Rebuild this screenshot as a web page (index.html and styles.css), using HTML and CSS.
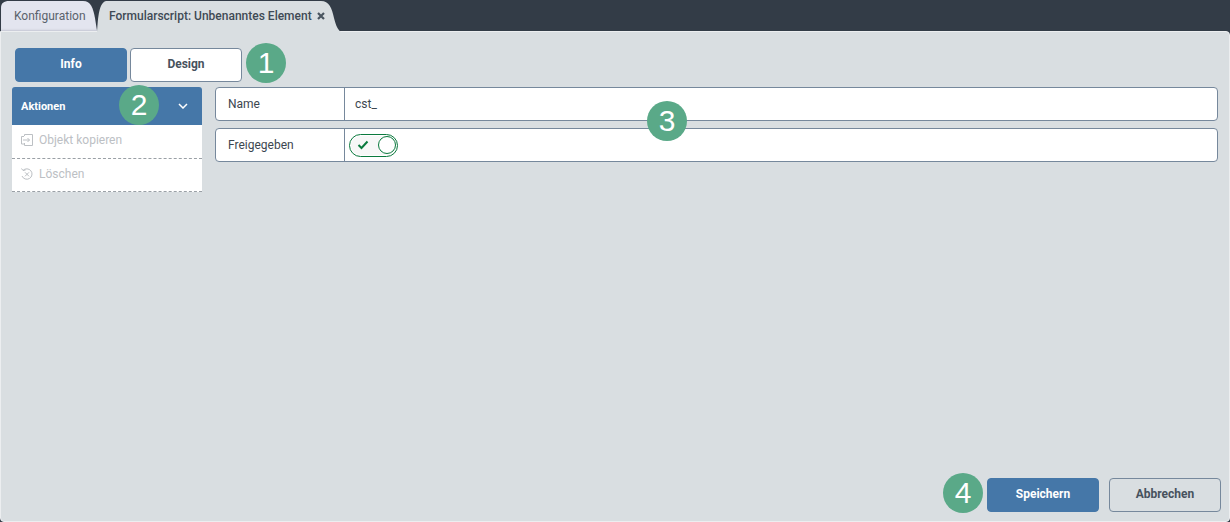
FILE: index.html
```html
<!DOCTYPE html>
<html lang="de">
<head>
<meta charset="utf-8">
<title>Formularscript</title>
<link rel="stylesheet" href="styles.css">
</head>
<body>
<div class="tabbar">
  <div class="tab tab-inactive">Konfiguration</div>
  <div class="tab tab-active">
    <span>Formularscript: Unbenanntes Element</span>
    <svg class="tab-close" viewBox="0 0 8 8" width="8" height="8"><path d="M1 1L7 7M7 1L1 7" stroke="#4a5560" stroke-width="2.2" fill="none"/></svg>
  </div>
</div>
<main class="panel">
  <div class="modes">
    <button class="btn btn-primary">Info</button>
    <button class="btn btn-outline btn-white">Design</button>
    <span class="marker marker-1">1</span>
  </div>
  <div class="columns">
    <aside class="side">
      <div class="side-head">
        <span>Aktionen</span>
        <svg viewBox="0 0 10 6" width="10" height="6"><path d="M1 1L5 5L9 1" stroke="#fff" stroke-width="1.5" fill="none"/></svg>
        <span class="marker marker-2">2</span>
      </div>
      <div class="side-item">
        <svg viewBox="0 0 14 14" width="14" height="14" fill="none" stroke="#bcc0c4" stroke-width="1"><path d="M1.500 11V3.500H4M1.500 11H4.500M4.500 3V1.500H12.500V12.500H4.500V10M3 7H9.500M7.500 5L9.500 7L7.500 9"/></svg>
        <span>Objekt kopieren</span>
      </div>
      <div class="side-item">
        <svg viewBox="0 0 14 14" width="14" height="14" fill="none" stroke="#bcc0c4" stroke-width="1"><path d="M3 3.500A5.200 5.200 0 1 1 2 9M1.500 1.500L3 3.500L5.500 3M5 5.300L9 9.300M9 5.300L5 9.300"/></svg>
        <span>Löschen</span>
      </div>
    </aside>
    <section class="form">
      <div class="row">
        <div class="row-label">Name</div>
        <div class="row-value">cst_</div>
      </div>
      <div class="row">
        <div class="row-label">Freigegeben</div>
        <div class="row-value">
          <div class="toggle">
            <svg viewBox="0 0 12 10" width="12" height="10"><path d="M1.500 5L4.500 8L10.500 1.500" stroke="#0b7a3e" stroke-width="2" fill="none"/></svg>
            <span class="knob"></span>
          </div>
        </div>
      </div>
      <span class="marker marker-3">3</span>
    </section>
  </div>
  <div class="actions">
    <span class="marker marker-4">4</span>
    <button class="btn btn-primary">Speichern</button>
    <button class="btn btn-outline">Abbrechen</button>
  </div>
</main>
</body>
</html>
```
FILE: styles.css
```css
* { box-sizing: border-box; }
html, body { margin: 0; padding: 0; }
body {
  width: 1230px;
  height: 522px;
  background: #333c47;
  font-family: Roboto, "Liberation Sans", sans-serif;
  color: #3c4650;
  overflow: hidden;
  display: flex;
  flex-direction: column;
}
.tabbar {
  height: 31px;
  display: flex;
  align-items: flex-start;
  padding-left: 1px;
  flex: none;
  position: relative;
  z-index: 1;
}
.tab {
  height: 32px;
  display: flex;
  align-items: center;
  font-size: 12px;
  flex: none;
}
.tab-inactive {
  width: 96px;
  padding: 0 0 1px 13px;
  background: #e3e5ef;
  color: #5a626c;
  clip-path: path("M0 31 L0 8 C0 3 3 1 8 1 L82 1 C90 1 92 8 94 18 L96 31 Z");
  box-shadow: inset 0 -3px 2px -1px #c4c7d2;
}
.tab-active {
  width: 244px;
  padding: 0 0 0 12px;
  gap: 5px;
  background: #d9dee1;
  color: #3f4a55;
  font-weight: 500;
  clip-path: path("M0 32 C1 22 1 3 9 1 L224 1 C232 1 235 8 237 18 C239 26 241 30 244 32 Z");
}
.panel {
  flex: 1;
  background: #d9dee1;
  border: 1px solid #eceef0;
  border-radius: 0 4px 4px 4px;
  display: flex;
  flex-direction: column;
  position: relative;
}
.modes {
  display: flex;
  gap: 3px;
  padding: 16px 0 0 14px;
  height: 55px;
  flex: none;
  position: relative;
}
.btn {
  width: 112px;
  height: 34px;
  border-radius: 4px;
  font-family: inherit;
  font-size: 12px;
  font-weight: 700;
  padding: 0 0 2px;
  cursor: pointer;
}
.btn-primary {
  background: #4577a8;
  color: #fff;
  border: 1px solid #4577a8;
}
.btn-outline {
  background: transparent;
  color: #47525d;
  border: 1px solid #76889c;
}
.btn-white { background: #fff; }
.marker {
  position: absolute;
  width: 40px;
  height: 40px;
  border-radius: 50%;
  background: #5aa988;
  color: #fff;
  font-family: "Liberation Sans", sans-serif;
  font-size: 30px;
  font-weight: 400;
  line-height: 40px;
  text-align: center;
}
.marker-1 { left: 245px; top: 11px; }
.marker-2 { left: 107px; top: -2px; }
.marker-3 { left: 432px; top: 14px; }
.marker-4 { position: static; margin: 0 -6px -1px 0; }
.columns {
  display: flex;
  gap: 13px;
  padding-left: 11px;
  padding-right: 11px;
  flex: 1;
}
.side {
  width: 190px;
  flex: none;
}
.side-head {
  height: 38px;
  background: #4577a8;
  color: #fff;
  font-size: 11px;
  font-weight: 700;
  border-radius: 3px 3px 0 0;
  padding: 0 14px 0 9px;
  display: flex;
  align-items: center;
  justify-content: space-between;
  position: relative;
}
.side-item {
  height: 34px;
  background: #fff;
  border-bottom: 1px dashed #9aa0a6;
  color: #bcc0c4;
  font-size: 12px;
  display: flex;
  align-items: center;
  gap: 5px;
  padding: 0 0 3px 8px;
}
.side-item:last-child { height: 33px; }
.form {
  flex: 1;
  display: flex;
  flex-direction: column;
  gap: 7px;
  position: relative;
}
.row {
  height: 34px;
  display: flex;
  background: #fff;
  border: 1px solid #76889c;
  border-radius: 4px;
  font-size: 12px;
}
.row-label {
  width: 129px;
  padding-left: 12px;
  border-right: 1px solid #76889c;
  display: flex;
  align-items: center;
}
.row-value {
  flex: 1;
  padding-left: 4px;
  display: flex;
  align-items: center;
}
.row:first-child .row-value { padding-left: 10px; }
.toggle {
  width: 49px;
  height: 23px;
  border: 1px solid #0b7a3e;
  border-radius: 12px;
  background: #f7f7f7;
  box-shadow: inset 0 0 0 1px #fff;
  display: flex;
  align-items: center;
  justify-content: space-between;
  padding: 0 0 0 7px;
}
.knob {
  width: 18px;
  height: 18px;
  margin-right: 1px;
  border-radius: 50%;
  background: #fff;
  border: 1px solid #0b7a3e;
}
.actions {
  display: flex;
  justify-content: flex-end;
  align-items: flex-end;
  gap: 10px;
  padding: 0 8px 9px 0;
  flex: none;
}
```
